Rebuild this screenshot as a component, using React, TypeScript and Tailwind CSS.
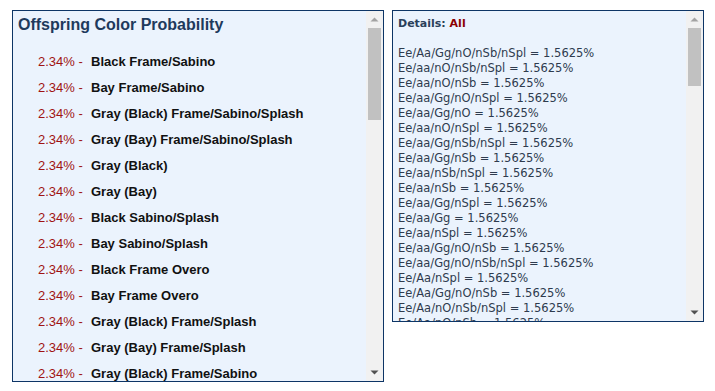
import React from "react";

const items = [
  "Black Frame/Sabino",
  "Bay Frame/Sabino",
  "Gray (Black) Frame/Sabino/Splash",
  "Gray (Bay) Frame/Sabino/Splash",
  "Gray (Black)",
  "Gray (Bay)",
  "Black Sabino/Splash",
  "Bay Sabino/Splash",
  "Black Frame Overo",
  "Bay Frame Overo",
  "Gray (Black) Frame/Splash",
  "Gray (Bay) Frame/Splash",
  "Gray (Black) Frame/Sabino",
];

const details = [
  "Ee/Aa/Gg/nO/nSb/nSpl",
  "Ee/aa/nO/nSb/nSpl",
  "Ee/aa/nO/nSb",
  "Ee/aa/Gg/nO/nSpl",
  "Ee/aa/Gg/nO",
  "Ee/aa/nO/nSpl",
  "Ee/aa/Gg/nSb/nSpl",
  "Ee/aa/Gg/nSb",
  "Ee/aa/nSb/nSpl",
  "Ee/aa/nSb",
  "Ee/aa/Gg/nSpl",
  "Ee/aa/Gg",
  "Ee/aa/nSpl",
  "Ee/aa/Gg/nO/nSb",
  "Ee/aa/Gg/nO/nSb/nSpl",
  "Ee/Aa/nSpl",
  "Ee/Aa/Gg/nO/nSb",
  "Ee/Aa/nO/nSb/nSpl",
  "Ee/Aa/nO/nSb",
];

function Scrollbar({ thumb }: { thumb: string }) {
  return (
    <div className="w-[17px] shrink-0 bg-[#f1f1f1] flex flex-col">
      <div className="h-[17px] flex items-center justify-center">
        <svg width="9" height="5" viewBox="0 0 9 5">
          <path d="M0.5 4.5 L4.5 0.5 L8.5 4.5 Z" fill="#a3a3a3" />
        </svg>
      </div>
      <div className="flex-1 px-[2px]">
        <div className={`${thumb} bg-[#c1c1c1]`} />
      </div>
      <div className="h-[17px] flex items-center justify-center">
        <svg width="9" height="5" viewBox="0 0 9 5">
          <path d="M0.5 0.5 L8.5 0.5 L4.5 4.5 Z" fill="#505050" />
        </svg>
      </div>
    </div>
  );
}

export default function App() {
  return (
    <div className="w-[715px] h-[391px] bg-white pl-[12px] pt-[10px] flex items-start gap-[8px]">
      <div className="w-[372px] h-[372px] border border-[#0d3566] bg-[#ebf3fd] flex overflow-hidden">
        <div className="flex-1 overflow-hidden pl-[5px] pt-[4px] font-['Liberation_Sans',Arial,sans-serif]">
          <div className="text-[16px] leading-[19px] font-bold text-[#1e3a5c]">
            Offspring Color Probability
          </div>
          <div className="mt-[15px] pl-[20px]">
            {items.map((it, i) => (
              <div key={i} className="h-[26px] flex items-center text-[13px] whitespace-nowrap">
                <span className="inline-block w-[53px] text-[#a01313]">2.34% -</span>
                <span className="font-bold text-[#111]">{it}</span>
              </div>
            ))}
          </div>
        </div>
        <Scrollbar thumb="h-[92px]" />
      </div>
      <div className="w-[312px] h-[312px] border border-[#0d3566] bg-[#ebf3fd] flex overflow-hidden">
        <div className="flex-1 overflow-hidden pl-[5px] pt-[5px] font-['DejaVu_Sans',Verdana,sans-serif] text-[11.5px] leading-[15px] text-[#2e3b4e] whitespace-nowrap">
          <div className="font-bold text-[#2a3f5a] text-[11px]">
            Details: <span className="text-[#8b0000]">All</span>
          </div>
          <div className="h-[15px]" />
          {details.map((d, i) => (
            <div key={i}>{d} = 1.5625%</div>
          ))}
        </div>
        <Scrollbar thumb="h-[58px]" />
      </div>
    </div>
  );
}
